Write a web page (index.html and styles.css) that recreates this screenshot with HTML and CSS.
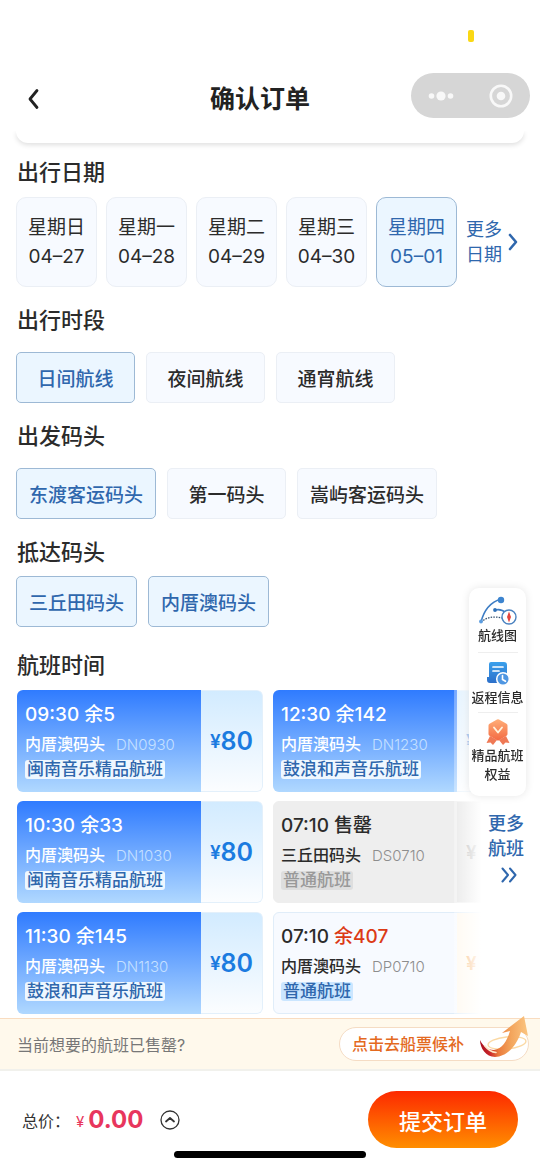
FILE: index.html
```html
<!DOCTYPE html>
<html lang="zh-CN">
<head>
  <meta charset="UTF-8" />
  <meta name="viewport" content="width=device-width, initial-scale=1.0"/>
  <title>确认订单</title>
  <link rel="stylesheet" href="styles.css">
</head>
<body>
<header class="header">
  <div class="status-bar"><span class="status-mark"></span></div>
  <div class="nav">
    <button class="back" type="button" aria-label="返回">
      <svg width="14" height="22" viewBox="0 0 14 22"><path d="M11 2.500 4 11l7 8.500" fill="none" stroke="#222" stroke-width="2.800" stroke-linecap="round" stroke-linejoin="round"/></svg>
    </button>
    <h1>确认订单</h1>
    <div class="capsule">
      <button type="button" aria-label="更多">
        <svg width="28" height="12" viewBox="0 0 28 12" fill="#f8f8f8"><circle cx="4.500" cy="6" r="2.800"/><circle cx="14" cy="6" r="4.600"/><circle cx="23.500" cy="6" r="2.800"/></svg>
      </button>
      <button type="button" aria-label="关闭">
        <svg width="26" height="26" viewBox="0 0 26 26"><circle cx="13" cy="13" r="10.200" fill="none" stroke="#f8f8f8" stroke-width="2.600"/><circle cx="13" cy="13" r="4.300" fill="#f8f8f8"/></svg>
      </button>
    </div>
  </div>
</header>

<main class="content">
  <div class="panel-edge"></div>

  <section>
    <h2>出行日期</h2>
    <div class="days">
      <button class="day" type="button">星期日<span>04–27</span></button>
      <button class="day" type="button">星期一<span>04–28</span></button>
      <button class="day" type="button">星期二<span>04–29</span></button>
      <button class="day" type="button">星期三<span>04–30</span></button>
      <button class="day active" type="button" aria-pressed="true">星期四<span>05–01</span></button>
      <a class="more-days" href="#">
        <span>更多<br>日期</span>
        <svg width="12" height="18" viewBox="0 0 12 18"><path d="M3 2l6 7-6 7" fill="none" stroke="#2f67ad" stroke-width="2.600" stroke-linecap="round" stroke-linejoin="round"/></svg>
      </a>
    </div>
  </section>

  <section>
    <h2>出行时段</h2>
    <div class="chips spaced">
      <button class="chip active" type="button" aria-pressed="true">日间航线</button>
      <button class="chip" type="button">夜间航线</button>
      <button class="chip" type="button">通宵航线</button>
    </div>
  </section>

  <section>
    <h2>出发码头</h2>
    <div class="chips spaced">
      <button class="chip active" type="button" aria-pressed="true">东渡客运码头</button>
      <button class="chip" type="button">第一码头</button>
      <button class="chip" type="button">嵩屿客运码头</button>
    </div>
  </section>

  <section>
    <h2>抵达码头</h2>
    <div class="chips">
      <button class="chip active" type="button" aria-pressed="true">三丘田码头</button>
      <button class="chip active" type="button" aria-pressed="true">内厝澳码头</button>
    </div>
  </section>

  <section class="flights-section">
    <h2>航班时间</h2>
    <div class="flights-row">
      <div class="flights-scroll">
        <div class="flights">
          <button class="flight premium" type="button">
            <span class="info"><span class="time">09:30 余5</span><span class="dock">内厝澳码头<span class="code">DN0930</span></span><span class="tag">闽南音乐精品航班</span></span>
            <span class="price"><small>¥</small>80</span>
          </button>
          <button class="flight premium next" type="button">
            <span class="info"><span class="time">12:30 余142</span><span class="dock">内厝澳码头<span class="code">DN1230</span></span><span class="tag">鼓浪和声音乐航班</span></span>
            <span class="price"><small>¥</small></span>
          </button>
          <button class="flight premium" type="button">
            <span class="info"><span class="time">10:30 余33</span><span class="dock">内厝澳码头<span class="code">DN1030</span></span><span class="tag">闽南音乐精品航班</span></span>
            <span class="price"><small>¥</small>80</span>
          </button>
          <button class="flight next sold-out" type="button" disabled>
            <span class="info"><span class="time">07:10 售罄</span><span class="dock">三丘田码头<span class="code">DS0710</span></span><span class="tag">普通航班</span></span>
            <span class="price"><small>¥</small></span>
          </button>
          <button class="flight premium" type="button">
            <span class="info"><span class="time">11:30 余145</span><span class="dock">内厝澳码头<span class="code">DN1130</span></span><span class="tag">鼓浪和声音乐航班</span></span>
            <span class="price"><small>¥</small>80</span>
          </button>
          <button class="flight next" type="button">
            <span class="info"><span class="time">07:10 <em>余407</em></span><span class="dock">内厝澳码头<span class="code">DP0710</span></span><span class="tag">普通航班</span></span>
            <span class="price"><small>¥</small></span>
          </button>
        </div>
      </div>
      <a class="more-flights" href="#">
        更多<br>航班
        <svg width="18" height="16" viewBox="0 0 18 16"><path d="M2.500 1.500 8 8l-5.500 6.500M10 1.500 15.500 8 10 14.500" fill="none" stroke="#2f67ad" stroke-width="2" stroke-linecap="round" stroke-linejoin="round"/></svg>
      </a>
    </div>
  </section>
</main>

<!-- 悬浮入口 -->
<nav class="side-menu">
  <a href="#">
    <svg width="40" height="30" viewBox="0 0 40 30" fill="none">
      <path d="M3 26C6 14 13 6 23 3" stroke="#3c7cc4" stroke-width="1.600"/>
      <path d="M3 26c6-5 13-6 21-4" stroke="#34506e" stroke-width="1.300" stroke-dasharray="1.500 1.200"/>
      <path d="M17 14c4-1 8 0 11 3" stroke="#3c7cc4" stroke-width="1.600"/>
      <circle cx="23" cy="4" r="3.200" fill="#3c84cf"/>
      <circle cx="17" cy="14" r="1.900" fill="#2e70b7"/>
      <circle cx="3" cy="25.500" r="1.900" fill="#5b9de0"/>
      <circle cx="31" cy="21" r="7" fill="#fff" stroke="#4a82c0" stroke-width="1.400"/>
      <path d="M31 15.500 33 21l-2 5.500L29 21z" fill="#e5443b"/>
    </svg>
    航线图
  </a>
  <a href="#">
    <svg width="26" height="28" viewBox="0 0 26 28">
      <defs><linearGradient id="doc" x1="0" y1="0" x2="0" y2="1"><stop offset="0" stop-color="#3aa0ec"/><stop offset="1" stop-color="#2c6fc9"/></linearGradient></defs>
      <path d="M6 2h13a3 3 0 0 1 3 3v18H5a3 3 0 0 1-3-3V17h2V4a2 2 0 0 1 2-2z" fill="url(#doc)"/>
      <path d="M8 7h10M8 11h6" stroke="#fff" stroke-width="1.700" stroke-linecap="round"/>
      <circle cx="18" cy="19" r="6.300" fill="#4e96e2" stroke="#fff" stroke-width="1.500"/>
      <path d="M17.500 15.500V19.500l3 1.800" fill="none" stroke="#fff" stroke-width="1.600" stroke-linecap="round"/>
    </svg>
    返程信息
  </a>
  <a href="#">
    <svg width="26" height="28" viewBox="0 0 26 28">
      <defs><linearGradient id="medal" x1="0" y1="0" x2="0" y2="1"><stop offset="0" stop-color="#ffae78"/><stop offset="1" stop-color="#f36a42"/></linearGradient></defs>
      <path d="M5 18 1.500 25l4-.500L8 27l4-5zM21 18l3.500 7-4-.500L18 27l-4-5z" fill="#ef7955"/>
      <path d="M12 1.500a2 2 0 0 1 2 0l7.500 4.300a2 2 0 0 1 1 1.700v8.600a2 2 0 0 1-1 1.700L14 22.300a2 2 0 0 1-2 0l-7.500-4.500a2 2 0 0 1-1-1.700V7.500a2 2 0 0 1 1-1.700z" fill="url(#medal)"/>
      <path d="m9 9.500 4 5 4-5" fill="none" stroke="#fff3dd" stroke-width="1.900" stroke-linecap="round" stroke-linejoin="round"/>
    </svg>
    精品航班<br>权益
  </a>
</nav>

<footer class="footer">
  <div class="notice">
    <span>当前想要的航班已售罄?</span>
    <a class="waitlist" href="#">点击去船票候补
      <svg class="arrow" width="52" height="44" viewBox="0 0 52 44">
        <defs>
          <linearGradient id="tail" x1="0" y1="0" x2="1" y2="0"><stop offset="0" stop-color="#a80f1c"/><stop offset=".2" stop-color="#c9252a"/><stop offset=".38" stop-color="#ea7a3c"/><stop offset=".65" stop-color="#f3a55c"/><stop offset="1" stop-color="#fbc682"/></linearGradient>
        </defs>
        <ellipse cx="29" cy="29" rx="19" ry="6" fill="none" stroke="#fbd9a4" stroke-width="1.400" transform="rotate(-6 29 29)"/>
        <path d="M2 26c3 6 7 10 14 10C24 35 29 27 32 17l-8 2L46 2l4 20-7-4C39 31 29 43 17 43 8 43 2 34 2 26z" fill="url(#tail)"/>
        <path d="M7 32c3 4 6 6 11 6.500" fill="none" stroke="#ffe9c8" stroke-width="1.600" stroke-linecap="round"/>
      </svg>
    </a>
  </div>
  <div class="checkout">
    <div class="total">
      总价：<small>¥</small><strong>0.00</strong>
      <button class="expand" type="button" aria-label="明细">
        <svg width="20" height="20" viewBox="0 0 20 20" fill="none" stroke="#333" stroke-linecap="round" stroke-linejoin="round"><circle cx="10" cy="10" r="9" stroke-width="1.300"/><path d="m6 11.500 4-3.500 4 3.500" stroke-width="1.800"/></svg>
      </button>
    </div>
    <button class="submit" type="button">提交订单</button>
  </div>
  <div class="home-bar"></div>
</footer>
</body>
</html>
```

FILE: styles.css
```css
* {
  box-sizing: border-box;
}
body {
  margin: 0;
  min-height: 100vh;
  display: flex;
  flex-direction: column;
  background: #fff;
  color: #2b2b2b;
  font-family: Inter, "Noto Sans CJK SC", sans-serif;
}
button {
  font: inherit;
  color: inherit;
  border: none;
  background: none;
  padding: 0;
  cursor: pointer;
}
a {
  color: inherit;
  text-decoration: none;
}
svg {
  display: block;
  flex: none;
}
h1, h2 {
  margin: 0;
  font-weight: 500;
}

/* header */
.header {
  position: sticky;
  top: 0;
  z-index: 3;
  background: #fff;
  padding-bottom: 13px;
}
.status-bar {
  height: 73px;
  padding: 30px 66px 0 0;
  display: flex;
  justify-content: flex-end;
}
.status-mark {
  width: 6px;
  height: 12px;
  border-radius: 2px;
  background: #fad814;
}
.nav {
  display: grid;
  grid-template-columns: 1fr auto 1fr;
  align-items: center;
  padding: 0 10px 0 26px;
}
.back {
  width: 14px;
  padding-top: 6px;
}
.nav h1 {
  padding: 6px 16px 0 0;
  font-size: 25px;
  font-weight: 700;
  line-height: 32px;
  margin-right: 20px;
  color: #222;
}
.capsule {
  justify-self: end;
  width: 119px;
  height: 45px;
  border-radius: 23px;
  background: #d6d6d6;
  display: flex;
  justify-content: space-around;
  align-items: center;
}

/* content */
.content {
  flex: 1;
  padding: 0 16px 4px;
}
.panel-edge {
  height: 12px;
  margin-bottom: 13px;
  border-radius: 0 0 14px 14px;
  background: #fff;
  box-shadow: 0 2px 5px rgba(0,0,0,0.13);
}
section + section {
  margin-top: 17px;
}
h2 {
  padding-left: 1px;
  font-size: 22px;
  line-height: 32px;
}
.days {
  display: flex;
  gap: 9px;
  margin-top: 9px;
}
.day {
  width: 81px;
  height: 90px;
  border: 1px solid #ebeff5;
  border-radius: 10px;
  background: #f7faff;
  font-size: 19px;
  line-height: 29px;
}
.day span {
  display: block;
}
.day.active, .chip.active {
  color: #2f67ad;
  background: #ebf6ff;
  border-color: #9db9d5;
}
.more-days {
  display: flex;
  align-items: center;
  gap: 5px;
  font-size: 18px;
  line-height: 25px;
  color: #2f67ad;
}
.chips {
  display: flex;
  flex-wrap: wrap;
  gap: 11px;
  margin-top: 8px;
}
.chips.spaced {
  margin-top: 16px;
}
.chip {
  min-width: 119px;
  height: 51px;
  padding: 0 12px;
  border: 1px solid #ebeff5;
  border-radius: 5px;
  background: #f7faff;
  font-size: 19px;
  font-weight: 500;
}

/* flights */
section.flights-section {
  margin-top: 22px;
}
.flights-row {
  display: flex;
  align-items: center;
  justify-content: space-between;
  margin-top: 9px;
  padding-left: 1px;
}
.flights-scroll {
  position: relative;
  flex: 1;
  overflow: hidden;
}
.flights-scroll::after {
  content: "";
  position: absolute;
  inset: 0 0 0 auto;
  width: 29px;
  background: linear-gradient(90deg, rgba(255,255,255,0.3), #fff 95%);
}
.flights {
  display: grid;
  grid-template-columns: 246px 246px;
  gap: 9px 10px;
}
.flight {
  display: flex;
  height: 102px;
  border: 1px solid #e0edf9;
  border-radius: 6px;
  overflow: hidden;
  background: #f7faff;
  text-align: left;
}
.info {
  width: 183px;
  height: 100%;
  padding: 10px 7px 0;
  display: flex;
  flex-direction: column;
  align-items: flex-start;
}
.time {
  font-size: 19px;
  font-weight: 500;
  line-height: 28px;
}
.time em {
  font-style: normal;
  color: #dc3a16;
}
.dock {
  font-size: 16px;
  font-weight: 500;
  line-height: 30px;
  white-space: nowrap;
}
.code {
  margin-left: 11px;
  font-size: 15px;
  font-weight: 300;
  color: #8d8d8d;
}
.tag {
  padding: 0 2px;
  border-radius: 3px;
  font-size: 17px;
  font-weight: 500;
  line-height: 19px;
  white-space: nowrap;
  background: #cbe6ff;
  color: #2f67ad;
}
.price {
  flex: 1;
  height: 100%;
  display: flex;
  align-items: center;
  justify-content: center;
  font-size: 25px;
  font-weight: 600;
  color: #1b7be0;
  background: #fff8ed;
}
.price small {
  font-size: 19px;
  color: #f6a04c;
}
.premium {
  border: none;
  color: #fff;
}
.premium .info {
  width: 184px;
  padding: 11px 8px 0;
  background: linear-gradient(#2f7bff, #b0d8ff);
}
.premium .code {
  color: #c5e0ff;
}
.premium .tag {
  background: #eef7ff;
}
.premium .price {
  background: linear-gradient(#d2ebff, #fbfdff);
  border: 1px solid #e3f0fb;
  border-left: none;
  border-radius: 0 6px 6px 0;
}
.premium .price small {
  color: inherit;
}
.sold-out {
  background: #eee;
  border-color: #eee;
  color: #2b2b2b;
}
.sold-out .tag {
  background: #dedede;
  color: #999;
}
.sold-out .price {
  background: #e2e2e2;
}
.sold-out .price small {
  color: #999;
}
.next .price {
  justify-content: flex-start;
  padding-left: 9px;
}
.more-flights {
  width: 41px;
  padding-bottom: 10px;
  display: flex;
  flex-direction: column;
  align-items: flex-end;
  font-size: 18px;
  font-weight: 500;
  line-height: 25px;
  color: #2f67ad;
}
.more-flights svg {
  margin: 6px 6px 0 0;
}

/* floating menu */
.side-menu {
  position: fixed;
  right: 14px;
  bottom: 373px;
  z-index: 2;
  width: 57px;
  padding: 8px 0 12px;
  border-radius: 10px;
  background: #fff;
  box-shadow: 0 0 8px rgba(0,0,0,0.1);
  font-size: 13px;
  font-weight: 500;
  line-height: 19px;
  text-align: center;
  white-space: nowrap;
}
.side-menu a {
  display: flex;
  flex-direction: column;
  align-items: center;
}
.side-menu a + a::before {
  content: "";
  width: 40px;
  margin: 7px 0;
  border-top: 1px solid #eee;
}
.side-menu a + a + a::before {
  margin: 5px 0;
}

/* footer */
.footer {
  position: sticky;
  bottom: 0;
  z-index: 3;
  background: #fff;
  padding-bottom: 11px;
}
.notice {
  display: flex;
  align-items: center;
  justify-content: space-between;
  height: 53px;
  padding: 0 11px 0 17px;
  border-top: 1px solid #f9dcc0;
  border-bottom: 2px solid #f1f1ec;
  background: #fff9ec;
  font-size: 16px;
  color: #777;
}
.waitlist {
  position: relative;
  width: 190px;
  height: 34px;
  padding-left: 12px;
  border: 1px solid #f5dcc4;
  border-radius: 17px;
  background: #fff;
  color: #e46a1f;
  font-weight: 500;
  line-height: 32px;
}
.arrow {
  position: absolute;
  right: -2px;
  bottom: 2px;
}
.checkout {
  display: flex;
  align-items: center;
  justify-content: space-between;
  padding: 20px 22px 3px;
}
.total {
  display: flex;
  align-items: center;
  font-size: 16px;
  color: #333;
}
.total small {
  margin: 4px 4px 0 6px;
  font-size: 15px;
  color: #e8365d;
}
.total strong {
  font-size: 24px;
  font-weight: 700;
  color: #e8365d;
}
.expand {
  margin-left: 17px;
}
.submit {
  width: 150px;
  height: 57px;
  border-radius: 29px;
  background: linear-gradient(#fd2900, #ff8e00);
  color: #fff;
  font-size: 22px;
  font-weight: 500;
}
.home-bar {
  width: 192px;
  height: 7px;
  margin: 0 auto;
  border-radius: 4px;
  background: #000;
}
```
